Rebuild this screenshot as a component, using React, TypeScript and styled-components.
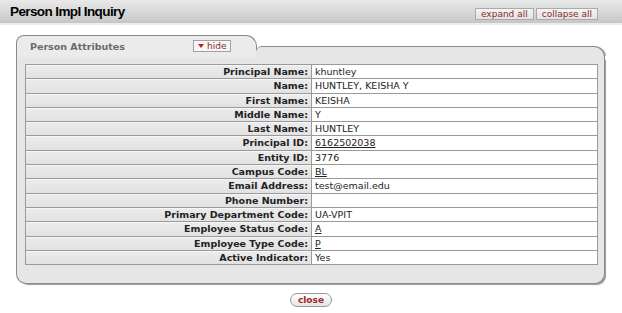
import React from "react";
import styled, { createGlobalStyle } from "styled-components";

const Global = createGlobalStyle`
  html, body { margin: 0; padding: 0; background: #fff; }
  body { font-family: "DejaVu Sans", Verdana, sans-serif; font-size: 11px; color: #000; }
`;

const Page = styled.div`
  width: 622px;
  height: 313px;
  overflow: hidden;
`;

const Header = styled.div`
  height: 23px;
  display: flex;
  align-items: center;
  justify-content: space-between;
  padding: 0 24px 0 10px;
  background: linear-gradient(180deg, #e9e9e9 0%, #dcdcdc 40%, #cfcfcf 75%, #c6c6c6 100%);
  border-bottom: 2px solid #ececec;
`;

const Title = styled.h1`
  margin: 0;
  font-family: "Liberation Sans", Arial, sans-serif;
  font-weight: bold;
  font-size: 13.5px;
  color: #000;
  letter-spacing: -0.6px;
`;

const HeaderButtons = styled.div`
  display: flex;
  gap: 2px;
  margin-top: 5px;
`;

const HeaderButton = styled.button`
  height: 12px;
  padding: 0 5px;
  border: 1px solid #aaa;
  background: linear-gradient(180deg, #f4f4f4, #e2e2e2);
  color: #8a2a2a;
  font-family: "DejaVu Sans", Verdana, sans-serif;
  font-size: 9px;
  line-height: 10px;
  cursor: pointer;
`;

const Main = styled.div`
  padding: 10px 16px 0 16px;
`;

const Panel = styled.div`
  display: flex;
  flex-direction: column;
  width: 589px;
`;

const TabRow = styled.div`
  display: flex;
  align-items: flex-end;
`;

const Tab = styled.div`
  width: 226px;
  height: 21px;
  display: flex;
  align-items: center;
  padding: 0 0 0 13px;
  background: #ebebeb;
  border: 1px solid #8a8a8a;
  border-bottom: none;
  border-radius: 8px 11px 0 0;
`;

const TabTitle = styled.span`
  font-weight: bold;
  font-size: 9.5px;
  color: #6a6a6a;
  width: 163px;
`;

const HideButton = styled.button`
  display: flex;
  align-items: center;
  gap: 3px;
  height: 12px;
  padding: 0 4px;
  border: 1px solid #a0a0a0;
  background: #f7f7f7;
  color: #8a2a2a;
  font-family: "DejaVu Sans", Verdana, sans-serif;
  font-size: 9px;
  line-height: 10px;
  margin-top: -1px;
`;

const Arrow = styled.span`
  width: 0;
  height: 0;
  border-left: 3px solid transparent;
  border-right: 3px solid transparent;
  border-top: 4px solid #c0201f;
`;

const TabRest = styled.div`
  flex: 1;
  height: 10px;
  margin-left: -1px;
  position: relative;
  z-index: 1;
  background: #e6e6e6;
  border-top: 1px solid #8a8a8a;
  border-right: 1px solid #8a8a8a;
  border-radius: 6px 11px 0 0;
  box-shadow: 2px 0 1px -1px #aaa;
`;

const Body = styled.div`
  background: #e6e6e6;
  border: 1px solid #8a8a8a;
  border-top: none;
  border-radius: 0 0 10px 10px;
  padding: 7px 6px 18px 8px;
  box-shadow: 2px 2px 1px -1px #999;
`;

const Table = styled.div`
  display: grid;
  grid-template-columns: 286px 1fr;
  border: 1px solid #9a9a9a;
  border-bottom: none;
  background: #fff;
`;

const Label = styled.div`
  height: 13.3px;
  line-height: 13.3px;
  text-align: right;
  font-weight: bold;
  font-size: 9.5px;
  color: #222;
  padding-right: 3px;
  background: linear-gradient(180deg, #ececec, #e2e2e2);
  border-bottom: 1px solid #9a9a9a;
  border-right: 1px solid #9a9a9a;
  box-shadow: inset 0 1px 0 #f7f7f7;
`;

const Value = styled.div<{ $link?: boolean }>`
  height: 13.3px;
  line-height: 13.3px;
  font-size: 9.5px;
  color: #222;
  padding-left: 3px;
  border-bottom: 1px solid #9a9a9a;
  text-decoration: ${(p) => (p.$link ? "underline" : "none")};
`;

const Footer = styled.div`
  display: flex;
  justify-content: center;
  padding: 9px 0 0 0;
`;

const CloseButton = styled.button`
  height: 14px;
  padding: 0 7px;
  border: 1px solid #999;
  border-radius: 7px;
  background: linear-gradient(180deg, #ffffff, #e4e4e4);
  color: #9a2a2a;
  font-family: "DejaVu Sans", Verdana, sans-serif;
  font-weight: bold;
  font-size: 9px;
  line-height: 12px;
`;

const rows: { label: string; value: string; link?: boolean }[] = [
  { label: "Principal Name:", value: "khuntley" },
  { label: "Name:", value: "HUNTLEY, KEISHA Y" },
  { label: "First Name:", value: "KEISHA" },
  { label: "Middle Name:", value: "Y" },
  { label: "Last Name:", value: "HUNTLEY" },
  { label: "Principal ID:", value: "6162502038", link: true },
  { label: "Entity ID:", value: "3776" },
  { label: "Campus Code:", value: "BL", link: true },
  { label: "Email Address:", value: "test@email.edu" },
  { label: "Phone Number:", value: "" },
  { label: "Primary Department Code:", value: "UA-VPIT" },
  { label: "Employee Status Code:", value: "A", link: true },
  { label: "Employee Type Code:", value: "P", link: true },
  { label: "Active Indicator:", value: "Yes" },
];

export default function App() {
  return (
    <Page>
      <Global />
      <Header>
        <Title>Person Impl Inquiry</Title>
        <HeaderButtons>
          <HeaderButton>expand all</HeaderButton>
          <HeaderButton>collapse all</HeaderButton>
        </HeaderButtons>
      </Header>
      <Main>
        <Panel>
          <TabRow>
            <Tab>
              <TabTitle>Person Attributes</TabTitle>
              <HideButton>
                <Arrow />
                hide
              </HideButton>
            </Tab>
            <TabRest />
          </TabRow>
          <Body>
            <Table>
              {rows.map((r) => (
                <React.Fragment key={r.label}>
                  <Label>{r.label}</Label>
                  <Value $link={r.link}>{r.value}</Value>
                </React.Fragment>
              ))}
            </Table>
          </Body>
        </Panel>
        <Footer>
          <CloseButton>close</CloseButton>
        </Footer>
      </Main>
    </Page>
  );
}
